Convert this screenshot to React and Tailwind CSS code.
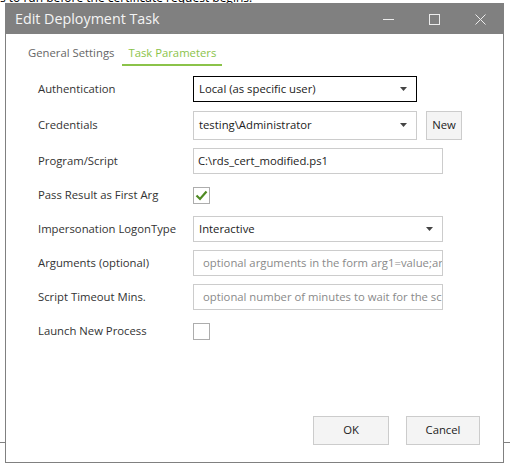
import React from 'react'

const Arrow = () => (
  <svg width="7" height="4" viewBox="0 0 7 4" className="shrink-0">
    <path d="M0 0h7L3.5 4z" fill="#444" />
  </svg>
)

const Select = ({ value, width, height = 'h-[26px]', focused }) => (
  <div
    className={`${width} ${height} flex items-center justify-between pl-[5px] pr-[9px] border ${
      focused ? 'border-black' : 'border-[#cccccc]'
    } bg-white text-[#222]`}
  >
    <span className="whitespace-nowrap">{value}</span>
    <Arrow />
  </div>
)

const TextBox = ({ value, placeholder }) => (
  <div className="w-[250px] h-[26px] flex items-center border border-[#cccccc] bg-white overflow-hidden whitespace-nowrap">
    {value ? (
      <span className="pl-[4px] text-[#222]">{value}</span>
    ) : (
      <span className="pl-[9px] text-[#8a8a8a]">{placeholder}</span>
    )}
  </div>
)

const CheckBox = ({ checked }) => (
  <div className="w-[17px] h-[17px] border border-[#adadad] bg-white flex items-center justify-center">
    {checked && (
      <svg width="13" height="11" viewBox="0 0 13 11">
        <path d="M1.5 5.5l3.5 3.5 6.5-7.5" fill="none" stroke="#4f8a22" strokeWidth="2.2" />
      </svg>
    )}
  </div>
)

const Row = ({ label, h = 'h-[34px]', children }) => (
  <div className={`flex items-center ${h} pl-[32px]`}>
    <div className="w-[155px] text-[#333] whitespace-nowrap">{label}</div>
    {children}
  </div>
)

export default function App() {
  return (
    <div className="relative w-[510px] h-[469px] overflow-hidden bg-white font-['Open_Sans',sans-serif] text-[11.3px]">
      {/* page behind the dialog */}
      <div className="-mt-[10px] h-[16px] text-[12px] leading-[16px] text-black whitespace-nowrap">
        s to run before the certificate request begins.
      </div>
      <div className="mt-[436px] h-px bg-[#808080]" />

      {/* dialog */}
      <div className="absolute left-[5px] top-[3px] w-[499px] h-[460px] border border-[#808080] bg-white flex flex-col">
        <div className="h-[30px] bg-[#808080] flex items-center shrink-0">
          <span className="pl-[9px] text-[14.3px] text-[#f4f4f4]">Edit Deployment Task</span>
          <div className="ml-auto flex h-full">
            <div className="w-[46px] flex items-center justify-center">
              <svg width="11" height="11" viewBox="0 0 11 11">
                <path d="M0 5.5h11" stroke="#ececec" strokeWidth="1" />
              </svg>
            </div>
            <div className="w-[46px] flex items-center justify-center">
              <svg width="11" height="11" viewBox="0 0 11 11">
                <rect x="0.5" y="0.5" width="10" height="10" fill="none" stroke="#ececec" strokeWidth="1" />
              </svg>
            </div>
            <div className="w-[46px] flex items-center justify-center">
              <svg width="11" height="11" viewBox="0 0 11 11">
                <path d="M0.5 0.5l10 10M10.5 0.5l-10 10" stroke="#ececec" strokeWidth="1" />
              </svg>
            </div>
          </div>
        </div>

        {/* tabs */}
        <div className="flex pl-[16px] mt-[8px] gap-[2px]">
          <div className="h-[22px] px-[6px] flex items-center text-[#666]">General Settings</div>
          <div className="h-[22px] px-[6px] flex items-center text-[#8bc34a] border-b-2 border-[#8bc34a] box-content">
            Task Parameters
          </div>
        </div>

        {/* form */}
        <div className="mt-[5px] flex flex-col">
          <Row label="Authentication" h="h-[36px]">
            <Select value="Local (as specific user)" width="w-[224px]" focused />
          </Row>
          <Row label="Credentials" h="h-[36px]">
            <Select value="testing\Administrator" width="w-[224px]" height="h-[29px]" />
            <div className="ml-[9px] w-[36px] h-[29px] border border-[#cccccc] bg-[#f4f4f4] flex items-center justify-center text-[#222]">
              New
            </div>
          </Row>
          <Row label="Program/Script" h="h-[36px]">
            <TextBox value="C:\rds_cert_modified.ps1" />
          </Row>
          <Row label="Pass Result as First Arg" h="h-[33px]">
            <CheckBox checked />
          </Row>
          <Row label="Impersonation LogonType">
            <Select value="Interactive" width="w-[250px]" />
          </Row>
          <Row label="Arguments (optional)">
            <TextBox placeholder="optional arguments in the form arg1=value;arg2=value" />
          </Row>
          <Row label="Script Timeout Mins.">
            <TextBox placeholder="optional number of minutes to wait for the script to complete" />
          </Row>
          <Row label="Launch New Process" h="h-[35px]">
            <CheckBox />
          </Row>
        </div>

        <div className="flex-1" />

        {/* footer */}
        <div className="flex justify-end gap-[17px] pr-[23px] pb-[17px]">
          <div className="w-[76px] h-[29px] border border-[#cccccc] bg-[#f4f4f4] flex items-center justify-center text-[#222]">
            OK
          </div>
          <div className="w-[74px] h-[29px] border border-[#cccccc] bg-[#f4f4f4] flex items-center justify-center text-[#222]">
            Cancel
          </div>
        </div>
      </div>
    </div>
  )
}
